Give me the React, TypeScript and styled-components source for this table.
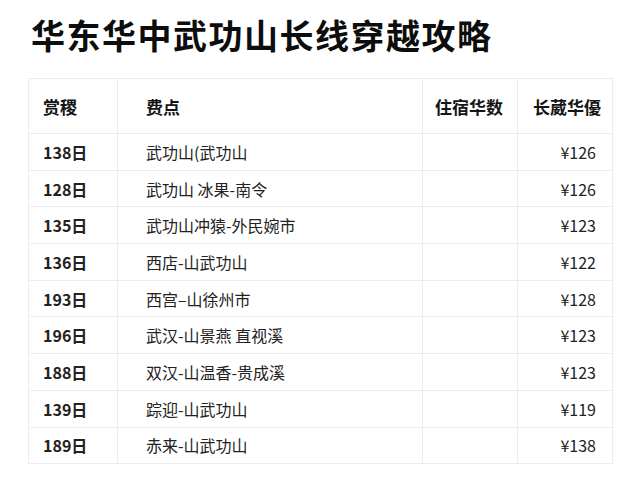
import { createGlobalStyle, styled } from "styled-components";

const GlobalStyle = createGlobalStyle`
    html, body {
        margin: 0;
        padding: 0;
        background: #ffffff;
    }
    body {
        font-family: "Noto Sans CJK SC", "Noto Sans", sans-serif;
        color: #151515;
    }
`;

const Page = styled.div`
    width: 640px;
    height: 480px;
    box-sizing: border-box;
    padding: 14px 28px 0 28px;
    overflow: hidden;
`;

const Title = styled.h1`
    margin: 0 0 22px 3px;
    font-size: 34px;
    line-height: 42px;
    font-weight: 700;
    letter-spacing: 1.5px;
    color: #0d0d0d;
`;

const Table = styled.table`
    width: 584px;
    border-collapse: collapse;
    table-layout: fixed;
    border: 1px solid #ececec;
`;

const HeadCell = styled.th<{ $align?: "left" | "right"; $pad: string }>`
    height: 54px;
    padding: ${(props) => props.$pad};
    border: 1px solid #ececec;
    text-align: ${(props) => props.$align ?? "left"};
    font-size: 17px;
    font-weight: 700;
    color: #151515;
`;

const Cell = styled.td<{ $align?: "left" | "right"; $pad: string; $bold?: boolean }>`
    height: 35.7px;
    padding: ${(props) => props.$pad};
    border: 1px solid #ececec;
    text-align: ${(props) => props.$align ?? "left"};
    font-size: 16px;
    font-weight: ${(props) => (props.$bold ? 600 : 400)};
    color: #222222;
    white-space: nowrap;
`;

const rows = [
    { day: "138日", route: "武功山(武功山", price: "¥126" },
    { day: "128日", route: "武功山 冰果-南令", price: "¥126" },
    { day: "135日", route: "武功山冲猿-外民婉市", price: "¥123" },
    { day: "136日", route: "西店-山武功山", price: "¥122" },
    { day: "193日", route: "西宫–山徐州市", price: "¥128" },
    { day: "196日", route: "武汉-山景燕 直视溪", price: "¥123" },
    { day: "188日", route: "双汉-山温香-贵成溪", price: "¥123" },
    { day: "139日", route: "踪迎-山武功山", price: "¥119" },
    { day: "189日", route: "赤来-山武功山", price: "¥138" },
];

export default function App() {
    return (
        <>
            <GlobalStyle />
            <Page>
                <Title>华东华中武功山长线穿越攻略</Title>
                <Table>
                    <colgroup>
                        <col style={{ width: 89 }} />
                        <col style={{ width: 305 }} />
                        <col style={{ width: 95 }} />
                        <col style={{ width: 95 }} />
                    </colgroup>
                    <thead>
                        <tr>
                            <HeadCell $pad="0 0 0 14px">赏稷</HeadCell>
                            <HeadCell $pad="0 0 0 28px">费点</HeadCell>
                            <HeadCell $align="right" $pad="0 14px 0 0">
                                住宿华数
                            </HeadCell>
                            <HeadCell $align="right" $pad="0 11px 0 0">
                                长葳华優
                            </HeadCell>
                        </tr>
                    </thead>
                    <tbody>
                        {rows.map((row, index) => (
                            <tr key={index}>
                                <Cell $bold $pad="0 0 0 14px">
                                    {row.day}
                                </Cell>
                                <Cell $pad="0 0 0 28px">{row.route}</Cell>
                                <Cell $pad="0" />
                                <Cell $align="right" $pad="0 16px 0 0">
                                    {row.price}
                                </Cell>
                            </tr>
                        ))}
                    </tbody>
                </Table>
            </Page>
        </>
    );
}
